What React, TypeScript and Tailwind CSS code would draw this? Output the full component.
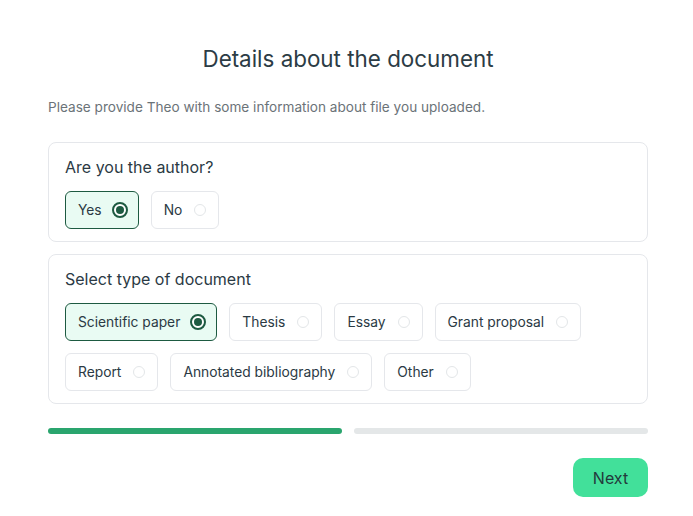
import React, { useState } from "react";

const authorOptions = ["Yes", "No"];
const docTypes = [
  "Scientific paper",
  "Thesis",
  "Essay",
  "Grant proposal",
  "Report",
  "Annotated bibliography",
  "Other",
];

function Radio({ checked }: { checked: boolean }) {
  return (
    <span className="flex h-4 w-4 items-center justify-center">
      {checked ? (
        <span className="flex h-4 w-4 items-center justify-center rounded-full border-2 border-[#1d5a41] bg-white">
          <span className="h-2 w-2 rounded-full bg-[#1d5a41]" />
        </span>
      ) : (
        <span className="h-3 w-3 rounded-full border border-[#e3e6e8] bg-white" />
      )}
    </span>
  );
}

function Choice({
  label,
  checked,
  onClick,
}: {
  label: string;
  checked: boolean;
  onClick: () => void;
}) {
  return (
    <button
      type="button"
      onClick={onClick}
      className={`flex h-[38px] items-center gap-[10px] rounded-md border pl-3 pr-[10px] text-[13.8px] text-[#2b3a44] ${
        checked ? "border-[#1d5a41] bg-[#e9fbf3]" : "border-[#e5e7eb] bg-white"
      }`}
    >
      <span>{label}</span>
      <Radio checked={checked} />
    </button>
  );
}

export default function App() {
  const [author, setAuthor] = useState("Yes");
  const [docType, setDocType] = useState("Scientific paper");

  return (
    <div className="min-h-screen bg-white font-['Inter',sans-serif] text-[#2b3a44]">
      <div className="ml-12 w-[600px] pt-[45px]">
        <h1 className="text-center text-[22.4px] leading-[28px] text-[#2c3c45]">
          Details about the document
        </h1>
        <p className="mt-6 text-[13.6px] leading-5 text-[#6b7378]">
          Please provide Theo with some information about file you uploaded.
        </p>

        <div className="mt-[25px] rounded-lg border border-[#e5e7eb] px-4 pt-3 pb-3">
          <div className="text-[16px] leading-6">Are you the author?</div>
          <div className="mt-3 flex flex-wrap gap-3">
            {authorOptions.map((o) => (
              <Choice key={o} label={o} checked={author === o} onClick={() => setAuthor(o)} />
            ))}
          </div>
        </div>

        <div className="mt-3 rounded-lg border border-[#e5e7eb] px-4 pt-3 pb-3">
          <div className="text-[16px] leading-6">Select type of document</div>
          <div className="mt-3 flex flex-wrap gap-3">
            {docTypes.map((o) => (
              <Choice key={o} label={o} checked={docType === o} onClick={() => setDocType(o)} />
            ))}
          </div>
        </div>

        <div className="mt-6 flex gap-3">
          <div className="h-[6px] flex-1 rounded-full bg-[#2aa56e]" />
          <div className="h-[6px] flex-1 rounded-full bg-[#e4e7e8]" />
        </div>

        <div className="mt-6 flex justify-end">
          <button
            type="button"
            className="h-[39px] w-[75px] rounded-[10px] bg-[#42e09a] text-[16px] text-[#233a3c]"
          >
            Next
          </button>
        </div>
      </div>
    </div>
  );
}
